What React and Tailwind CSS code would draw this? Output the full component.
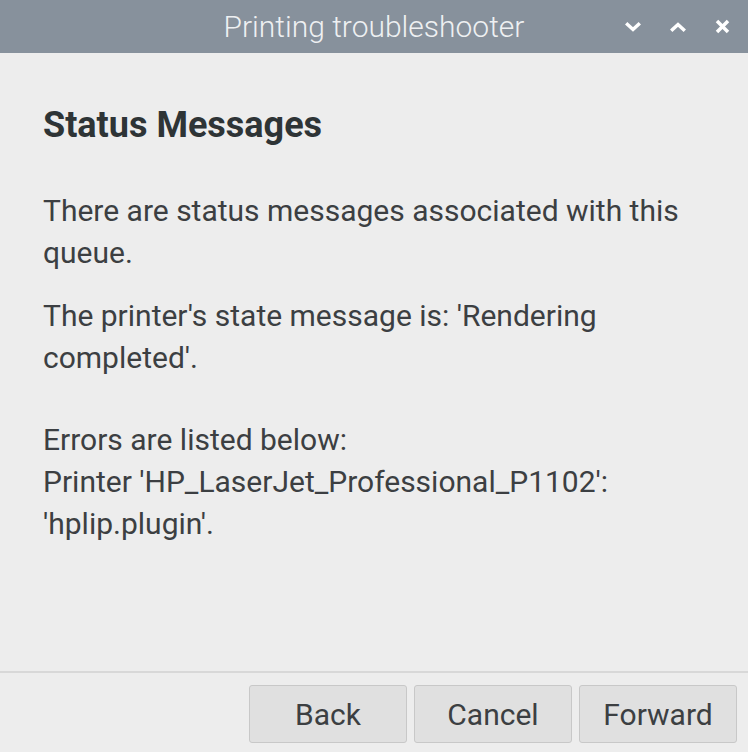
export default function App() {
  return (
    <div className="w-[748px] h-[752px] bg-[#ededed] flex flex-col overflow-hidden" style={{ fontFamily: 'Roboto, "Liberation Sans", sans-serif' }}>
      <div className="h-[53px] bg-[#87919c] flex items-center relative shrink-0">
        <div className="flex-1 text-center text-[30px] font-light text-[#eef0f2] leading-[53px]">Printing troubleshooter</div>
        <div className="absolute right-[18px] top-0 h-[53px] flex items-center gap-[29px]">
          <svg width="16" height="12" viewBox="0 0 16 12"><path d="M2.5 3.5 L8 8.5 L13.5 3.5" stroke="#fff" strokeWidth="3.5" fill="none" strokeLinecap="square" /></svg>
          <svg width="16" height="12" viewBox="0 0 16 12"><path d="M2.5 8.5 L8 3.5 L13.5 8.5" stroke="#fff" strokeWidth="3.5" fill="none" strokeLinecap="square" /></svg>
          <svg width="15" height="15" viewBox="0 0 15 15"><path d="M2 2 L13 13 M13 2 L2 13" stroke="#fff" strokeWidth="3.5" fill="none" /></svg>
        </div>
      </div>
      <div className="flex-1 px-[43px] pt-[51px] text-[#3c3f42]">
        <div className="text-[36px] font-bold text-[#2e3436] leading-[42px]">Status Messages</div>
        <div className="mt-[44px] text-[30px] leading-[42px]">There are status messages associated with this queue.</div>
        <div className="mt-[21px] text-[30px] leading-[42px]">The printer's state message is: 'Rendering completed'.</div>
        <div className="mt-[40px] text-[30px] leading-[42px]">
          <div>Errors are listed below:</div>
          <div>Printer 'HP_LaserJet_Professional_P1102':</div>
          <div>'hplip.plugin'.</div>
        </div>
      </div>
      <div className="h-[2px] bg-[#d8d8d8] shrink-0" />
      <div className="h-[79px] flex justify-end items-start pt-[12px] pr-[11px] gap-[7px] shrink-0">
        {["Back", "Cancel", "Forward"].map((l) => (
          <div key={l} className="w-[158px] h-[58px] border border-[#c8c8c8] rounded-[3px] bg-[#e0e0e0] flex items-center justify-center text-[30px] text-[#3c3f42]">{l}</div>
        ))}
      </div>
    </div>
  );
}
